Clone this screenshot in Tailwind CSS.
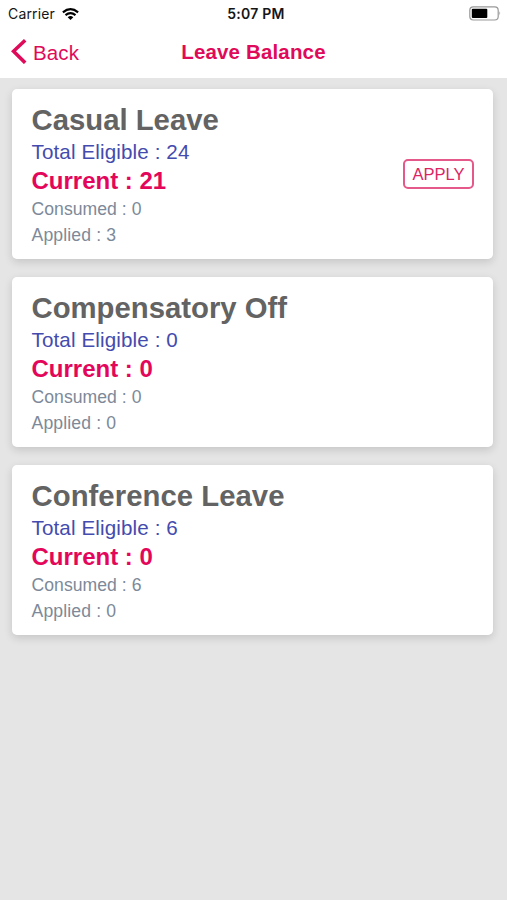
<!DOCTYPE html>
<html lang="en">
<head>
<meta charset="utf-8">
<title>Leave Balance</title>
<script src="https://cdn.jsdelivr.net/npm/@tailwindcss/browser@4"></script>
</head>
<body class="h-[900px] overflow-hidden bg-[#e5e5e5] font-['Liberation_Sans',Arial,sans-serif]">
<header class="h-[78px] bg-white">
  <div class="grid h-[27px] grid-cols-3 items-center font-[Inter,sans-serif] text-[14px] text-[#151515]">
    <div class="flex items-center gap-[7px] pl-[8px]">
      <span class="tracking-[0.15px]">Carrier</span>
      <svg class="h-[12px] w-[17px]" viewBox="0 0 17 12" fill="none" stroke="#000" stroke-width="2.200"><path d="M.9 4.300Q8.500-1.900 16.100 4.300M3.500 7.100Q8.500 3.200 13.500 7.100"/><path d="M5.700 9.200Q8.500 7 11.300 9.200L8.500 12Z" fill="#000" stroke="none"/></svg>
    </div>
    <span class="pl-[5px] text-center font-semibold tracking-[0.25px]">5:07 PM</span>
    <svg class="ml-auto mr-[5px] h-[15px] w-[33px]" viewBox="0 0 33 15"><rect x=".8" y=".8" width="28.400" height="13.200" rx="3.500" fill="#fff" stroke="#999" stroke-width="1.200"/><rect x="2.800" y="2.800" width="15.500" height="9.200" rx="1" fill="#000"/><path d="M30.500 5.200Q32.300 7.400 30.500 9.600Z" fill="#888"/></svg>
  </div>
  <div class="grid h-[49px] grid-cols-[1fr_auto_1fr] items-center text-[#df0a59]">
    <div class="flex items-center gap-[6px] pl-[11px]">
      <svg class="h-[25px] w-[16px]" viewBox="0 0 16 25" fill="none" stroke="currentColor" stroke-width="3.600"><path d="M14.200 1.300 2.500 12.300 14.200 23.800"/></svg>
      <span class="pt-[2px] text-[20.500px] leading-[26px] tracking-[0.15px]">Back</span>
    </div>
    <h1 class="text-[20.500px] font-bold leading-[26px] tracking-[0.150px]">Leave Balance</h1>
    <span></span>
  </div>
</header>
<main class="flex flex-col gap-[18px] pt-[11px] pr-[14px] pl-[12px] whitespace-nowrap">
  <section class="flex h-[170px] items-center justify-between rounded-[5px] bg-white pr-[19px] pl-[19.500px] shadow-[0_3px_8px_rgba(0,0,0,0.14)]">
    <div class="pt-[3px]">
      <h2 class="pb-[2px] text-[29.300px] font-bold leading-[32px] text-[#636363]">Casual Leave</h2>
      <p class="text-[20.600px] leading-[28px] tracking-[0.120px] text-[#444bae]">Total Eligible : 24</p>
      <p class="pb-[2px] text-[24px] font-bold leading-[29px] text-[#e3065a]">Current : 21</p>
      <p class="text-[17.600px] leading-[25px] tracking-[0.040px] text-[#7d8998]">Consumed : 0</p>
      <p class="text-[17.600px] leading-[26px] tracking-[0.150px] text-[#7d8998]">Applied : 3</p>
    </div>
    <button class="h-[30px] w-[71px] rounded-[5px] border-2 border-[#e5588a] text-[16.500px] leading-none text-[#dc2463]">APPLY</button>
  </section>
  <section class="flex h-[170px] items-center rounded-[5px] bg-white px-[19.500px] shadow-[0_3px_8px_rgba(0,0,0,0.14)]">
    <div class="pt-[3px]">
      <h2 class="pb-[2px] text-[29.300px] font-bold leading-[32px] text-[#636363]">Compensatory Off</h2>
      <p class="text-[20.600px] leading-[28px] tracking-[0.120px] text-[#444bae]">Total Eligible : 0</p>
      <p class="pb-[2px] text-[24px] font-bold leading-[29px] text-[#e3065a]">Current : 0</p>
      <p class="text-[17.600px] leading-[25px] tracking-[0.040px] text-[#7d8998]">Consumed : 0</p>
      <p class="text-[17.600px] leading-[26px] tracking-[0.150px] text-[#7d8998]">Applied : 0</p>
    </div>
  </section>
  <section class="flex h-[170px] items-center rounded-[5px] bg-white px-[19.500px] shadow-[0_3px_8px_rgba(0,0,0,0.14)]">
    <div class="pt-[3px]">
      <h2 class="pb-[2px] text-[29.300px] font-bold leading-[32px] tracking-[0.040px] text-[#636363]">Conference Leave</h2>
      <p class="text-[20.600px] leading-[28px] tracking-[0.120px] text-[#444bae]">Total Eligible : 6</p>
      <p class="pb-[2px] text-[24px] font-bold leading-[29px] text-[#e3065a]">Current : 0</p>
      <p class="text-[17.600px] leading-[25px] tracking-[0.040px] text-[#7d8998]">Consumed : 6</p>
      <p class="text-[17.600px] leading-[26px] tracking-[0.150px] text-[#7d8998]">Applied : 0</p>
    </div>
  </section>
</main>
</body>
</html>
